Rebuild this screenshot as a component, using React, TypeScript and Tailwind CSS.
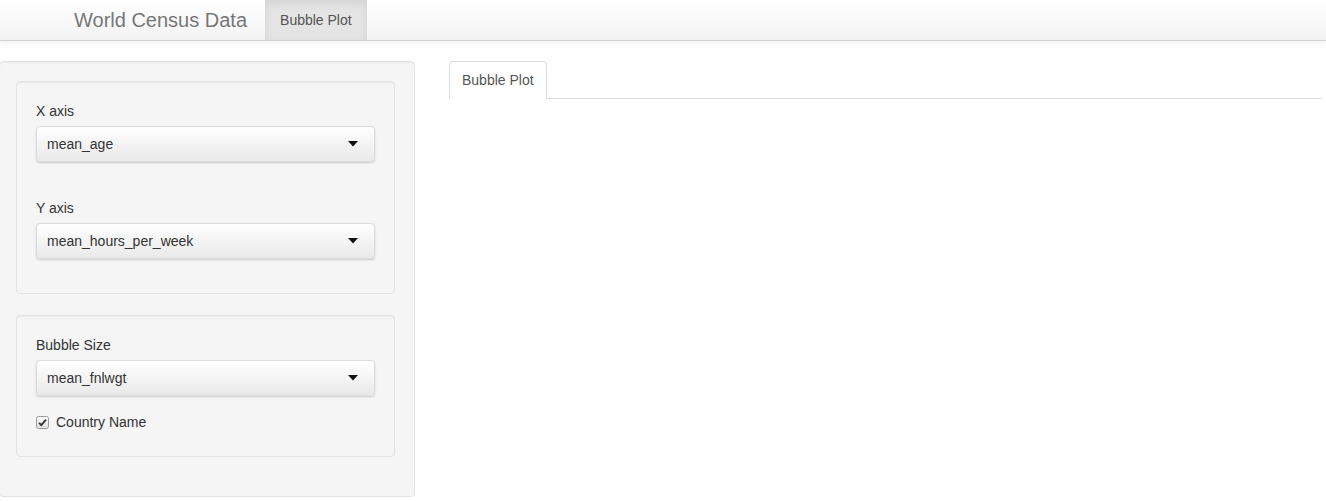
import React from "react";

const selects = [
  { label: "X axis", value: "mean_age" },
  { label: "Y axis", value: "mean_hours_per_week" },
];

function Caret() {
  return (
    <svg width="10" height="6" viewBox="0 0 10 6" className="shrink-0">
      <path d="M0 0 L10 0 L5 5.5 Z" fill="#111" />
    </svg>
  );
}

function Select({ value }: { value: string }) {
  return (
    <div className="h-[36px] w-full flex items-center justify-between pl-[10px] pr-[16px] rounded-[4px] border border-[#dcdcdc] bg-gradient-to-b from-white to-[#e9e9e9] shadow-[0_1px_2px_rgba(0,0,0,0.18)] text-[14px] text-[#333]">
      <span>{value}</span>
      <Caret />
    </div>
  );
}

function CheckBox() {
  return (
    <svg width="13" height="13" viewBox="0 0 13 13" className="shrink-0">
      <defs>
        <linearGradient id="cb" x1="0" y1="0" x2="0" y2="1">
          <stop offset="0" stopColor="#fdfdfd" />
          <stop offset="1" stopColor="#dedede" />
        </linearGradient>
      </defs>
      <rect x="0.5" y="0.5" width="12" height="12" rx="2" fill="url(#cb)" stroke="#9a9a9a" />
      <path d="M3 6.8 L5.3 9.2 L10 3.6" fill="none" stroke="#333" strokeWidth="1.8" />
    </svg>
  );
}

export default function App() {
  return (
    <div
      className="w-[1326px] h-[501px] bg-white overflow-hidden text-[#333]"
      style={{ fontFamily: '"Liberation Sans", Arial, sans-serif' }}
    >
      <nav className="h-[41px] flex bg-gradient-to-b from-white to-[#f3f3f3] border-b border-[#d4d4d4] shadow-[0_2px_4px_rgba(0,0,0,0.06)]">
        <div className="pl-[74px] pr-[18px] flex items-center text-[20px] text-[#777]">World Census Data</div>
        <div className="px-[15px] flex items-center text-[14px] text-[#555] bg-[#e4e4e4] shadow-[inset_0_3px_8px_rgba(0,0,0,0.08)]">
          Bubble Plot
        </div>
      </nav>

      <div className="flex pt-[20px]">
        <div className="w-[416px] ml-[-1px] h-[436px] bg-[#f5f5f5] border border-[#e3e3e3] rounded-[4px] p-[19px] pl-[16px] pr-[19px] shadow-[inset_0_1px_1px_rgba(0,0,0,0.05)]">
          <div className="bg-[#f5f5f5] border border-[#e3e3e3] rounded-[4px] p-[19px] shadow-[inset_0_1px_1px_rgba(0,0,0,0.05)]">
            {selects.map((s, i) => (
              <div key={i} className={i === 0 ? "mb-[36px]" : ""}>
                <div className="text-[14px] leading-[20px] mb-[5px]">{s.label}</div>
                <Select value={s.value} />
              </div>
            ))}
            <div className="h-[15px]" />
          </div>
          <div className="mt-[21px] bg-[#f5f5f5] border border-[#e3e3e3] rounded-[4px] p-[19px] pb-[24px] shadow-[inset_0_1px_1px_rgba(0,0,0,0.05)]">
            <div className="text-[14px] leading-[20px] mb-[5px]">Bubble Size</div>
            <Select value="mean_fnlwgt" />
            <div className="mt-[16px] flex items-center gap-[7px] text-[14px] leading-[20px]">
              <CheckBox />
              <span>Country Name</span>
            </div>
          </div>
        </div>

        <div className="flex-1 pl-[34px] pr-[4px]">
          <div className="flex border-b border-[#ddd]">
            <div className="h-[38px] px-[12px] flex items-center text-[14px] text-[#555] bg-white border border-[#ddd] border-b-white rounded-t-[4px] -mb-[1px]">
              Bubble Plot
            </div>
          </div>
        </div>
      </div>
    </div>
  );
}
